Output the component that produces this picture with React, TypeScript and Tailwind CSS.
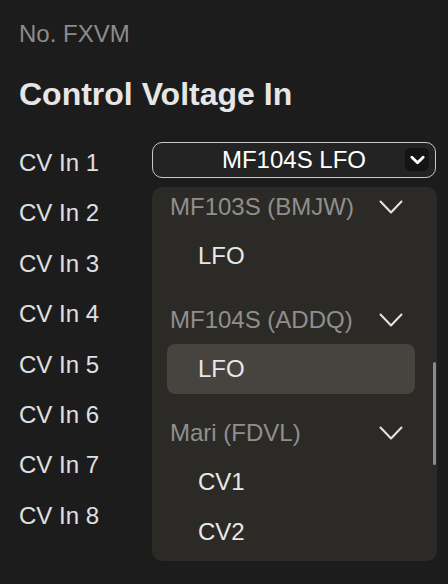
import React from 'react'

const inputs = ['CV In 1', 'CV In 2', 'CV In 3', 'CV In 4', 'CV In 5', 'CV In 6', 'CV In 7', 'CV In 8']

const groups = [
  { name: 'MF103S (BMJW)', items: ['LFO'] },
  { name: 'MF104S (ADDQ)', items: ['LFO'], selected: 'LFO' },
  { name: 'Mari (FDVL)', items: ['CV1', 'CV2'] },
]

function Chevron({ className }: { className?: string }) {
  return (
    <svg viewBox="0 0 24 14" className={className} fill="none">
      <polyline points="1.5,1.5 12,12.5 22.5,1.5" stroke="currentColor" strokeWidth="2" strokeLinecap="round" strokeLinejoin="round" />
    </svg>
  )
}

function Dropdown() {
  return (
    <div className="absolute left-0 top-[45px] z-10 h-[374px] w-[285px] overflow-hidden rounded-[10px] bg-[#2c2a26]">
      <div className="-mt-[5px] pl-[15px] pr-[22px]">
        {groups.map((g, gi) => (
          <div key={g.name} className={gi > 0 ? 'mt-[14px]' : ''}>
            <div className="flex h-[49px] items-center justify-between pl-[3px] pr-[12px] text-[#8f8f8f]">
              <span>{g.name}</span>
              <Chevron className="h-[14px] w-[24px] text-[#e4e4e4]" />
            </div>
            {g.items.map((item) => (
              <div
                key={item}
                className={
                  'flex h-[50px] items-center rounded-[8px] pl-[31px] text-[#e8e8e8] ' +
                  (g.selected === item ? 'bg-[#47433f]' : '')
                }
              >
                {item}
              </div>
            ))}
          </div>
        ))}
      </div>
      <div className="absolute right-[1px] top-[175px] h-[103px] w-[3px] rounded-full bg-[#8a8a8a]" />
    </div>
  )
}

export default function App() {
  return (
    <div
      className="h-[584px] w-[448px] overflow-hidden bg-[#1c1c1c] pl-[19px] pt-[20px] text-[24px]"
      style={{ fontFamily: '"Liberation Sans", Arial, sans-serif' }}
    >
      <div className="leading-[28px] text-[#8c8c8c]">No. FXVM</div>
      <h1 className="mt-[26px] text-[32px] font-bold leading-[40px] text-[#e6e6e6]">Control Voltage In</h1>

      <div className="mt-[24px]">
        {inputs.map((label, i) => (
          <div key={label} className="flex h-[50.4px] items-start">
            <div className="flex h-[50px] w-[133px] items-center text-[#e0e0e0]">{label}</div>
            {i === 0 && (
              <div className="relative mt-[4px]">
                <button className="relative flex h-[36px] w-[284px] items-center justify-center rounded-[10px] border border-[#c8c8c8] bg-[#232323] text-white">
                  <span className="leading-none">MF104S LFO</span>
                  <span className="absolute right-[6px] top-[5px] flex h-[23px] w-[24px] items-center justify-center rounded-[5px] bg-[#141414]">
                    <svg viewBox="0 0 16 10" className="h-[10px] w-[15px]" fill="none">
                      <polyline points="2,2 8,8 14,2" stroke="white" strokeWidth="3" strokeLinecap="round" strokeLinejoin="round" />
                    </svg>
                  </span>
                </button>
                <Dropdown />
              </div>
            )}
          </div>
        ))}
      </div>
    </div>
  )
}
